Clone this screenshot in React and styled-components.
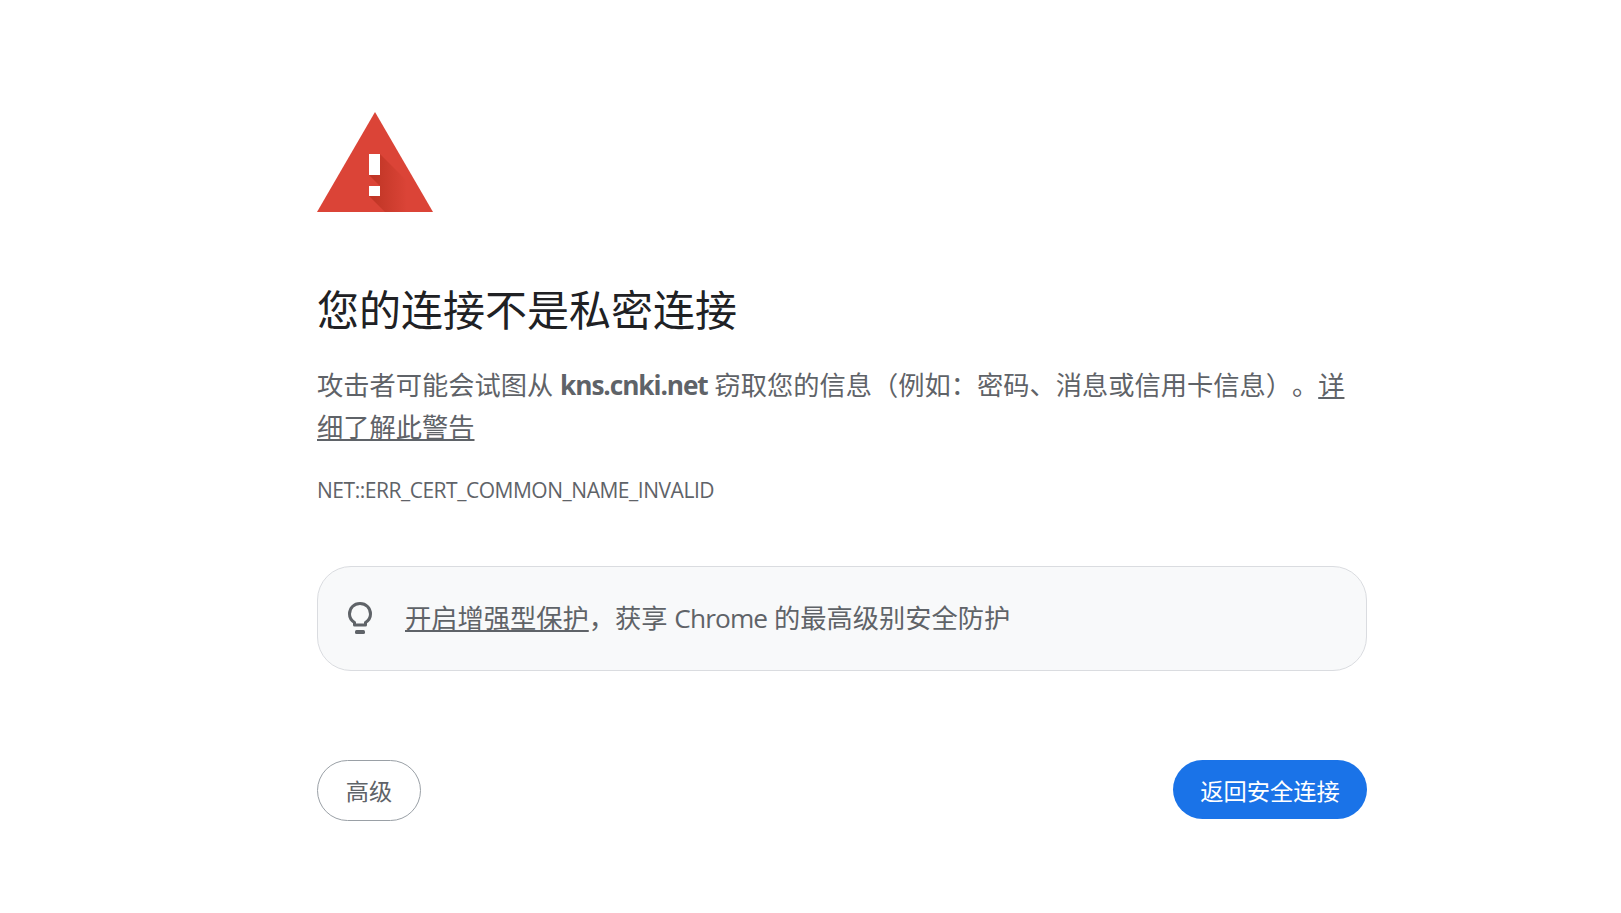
import styled, { createGlobalStyle } from 'styled-components';

const Global = createGlobalStyle`
  html, body { margin: 0; padding: 0; background: #fff; }
  body {
    font-family: "Open Sans", "Noto Sans CJK SC", sans-serif;
    color: #5f6368;
    text-spacing-trim: space-all;
  }
`;

const Page = styled.main`
  width: 1050px;
  margin-left: 317px;
  padding-top: 112px;
  box-sizing: border-box;
  height: 913px;
`;

const WarningIcon = styled.svg`
  display: block;
  width: 116px;
  height: 100px;
`;

const Title = styled.h1`
  margin: 70px 0 0;
  font-size: 42px;
  line-height: 56px;
  font-weight: 400;
  color: #202124;
`;

const Message = styled.p`
  margin: 26px 0 0;
  font-size: 26.25px;
  line-height: 42px;
  color: #5f6368;

  a { color: inherit; text-decoration: underline; }
`;

const Host = styled.strong`
  font-weight: 700;
  letter-spacing: -1.1px;
`;

const ErrorCode = styled.div`
  margin-top: 28px;
  font-size: 21px;
  line-height: 29px;
  letter-spacing: -0.47px;
  color: #5f6368;
`;

const Tip = styled.div`
  margin-top: 61px;
  height: 105px;
  box-sizing: border-box;
  display: flex;
  align-items: center;
  padding-left: 30px;
  gap: 33px;
  background: #f8f9fa;
  border: 1px solid #dadce0;
  border-radius: 34px;
  font-size: 26.25px;

  a { color: inherit; text-decoration: underline; }
`;

const TipText = styled.span`
  position: relative;
  top: -2px;
`;

const Brand = styled.span`
  letter-spacing: -0.9px;
`;

const Actions = styled.div`
  margin-top: 89px;
  display: flex;
  justify-content: space-between;
  align-items: flex-start;
`;

const Button = styled.button`
  font-family: inherit;
  font-size: 23.25px;
  border-radius: 32px;
  box-sizing: border-box;
  padding: 0;
  cursor: pointer;
`;

const Advanced = styled(Button)`
  width: 104px;
  height: 61px;
  padding-bottom: 2px;
  background: #fff;
  color: #5f6368;
  border: 1px solid #9aa0a6;
`;

const Back = styled(Button)`
  width: 194px;
  height: 59px;
  background: #1a73e8;
  color: #fff;
  border: none;
`;

export default function App() {
  return (
    <Page>
      <Global />
      <WarningIcon viewBox="0 0 116 100">
        <defs>
          <linearGradient id="shade" gradientUnits="userSpaceOnUse" x1="56" y1="0" x2="90" y2="0">
            <stop offset="0" stopColor="#a52714" stopOpacity="0.5" />
            <stop offset="1" stopColor="#a52714" stopOpacity="0" />
          </linearGradient>
        </defs>
        <path d="M58 0 L116 100 H0 Z" fill="#db4437" />
        <path d="M63 42 L109 88 L116 100 H68 L52 84 H63 V74 L52 63 H63 Z" fill="url(#shade)" />
        <rect x="52" y="42" width="11" height="21" fill="#fff" />
        <rect x="52" y="74" width="11" height="10" fill="#fff" />
      </WarningIcon>
      <Title>您的连接不是私密连接</Title>
      <Message>
        攻击者可能会试图从 <Host>kns.cnki.net</Host> 窃取您的信息（例如：密码、消息或信用卡信息）。<a href="#">详细了解此警告</a>
      </Message>
      <ErrorCode>NET::ERR_CERT_COMMON_NAME_INVALID</ErrorCode>
      <Tip>
        <svg width="24" height="33" viewBox="0 0 24 33" fill="none">
          <path d="M6.5 23 V20.5 C3.5 18.6 1.5 15.7 1.5 12 C1.5 6 6 1.5 12 1.5 C18 1.5 22.5 6 22.5 12 C22.5 15.7 20.5 18.6 17.5 20.5 V23 Z" stroke="#5f6368" strokeWidth="3" strokeLinejoin="round" />
          <rect x="7" y="28" width="10" height="4" rx="1.5" fill="#5f6368" />
        </svg>
        <TipText><a href="#">开启增强型保护</a>，获享 <Brand>Chrome</Brand> 的最高级别安全防护</TipText>
      </Tip>
      <Actions>
        <Advanced>高级</Advanced>
        <Back>返回安全连接</Back>
      </Actions>
    </Page>
  );
}
